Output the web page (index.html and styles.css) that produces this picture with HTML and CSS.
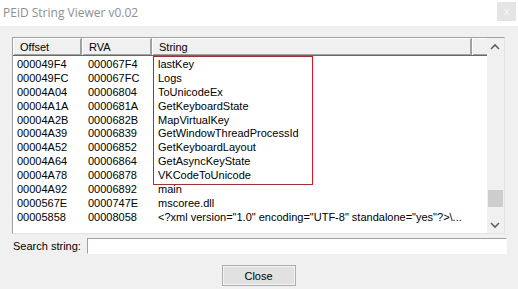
FILE: index.html
```html
<!DOCTYPE html>
<html lang="en">
<head>
    <meta charset="UTF-8">
    <title>PEiD String Viewer v0.02</title>
    <link rel="stylesheet" href="styles.css">
</head>
<body>
    <div class="window">
        <div class="title-bar">
            <span class="title">PEiD String Viewer v0.02</span>
            <span class="close-x">x</span>
        </div>

        <div class="client">
            <div class="list-box">
                <div class="list-main">
                    <div class="list-header">
                        <div class="hcell col-offset">Offset</div>
                        <div class="hcell col-rva">RVA</div>
                        <div class="hcell col-string">String</div>
                        <div class="hcell col-fill"></div>
                    </div>
                    <div class="rows">
                        <div class="row"><span class="col-offset">000049F4</span><span class="col-rva">000067F4</span><span class="col-string">lastKey</span></div>
                        <div class="row"><span class="col-offset">000049FC</span><span class="col-rva">000067FC</span><span class="col-string">Logs</span></div>
                        <div class="row"><span class="col-offset">00004A04</span><span class="col-rva">00006804</span><span class="col-string">ToUnicodeEx</span></div>
                        <div class="row"><span class="col-offset">00004A1A</span><span class="col-rva">0000681A</span><span class="col-string">GetKeyboardState</span></div>
                        <div class="row"><span class="col-offset">00004A2B</span><span class="col-rva">0000682B</span><span class="col-string">MapVirtualKey</span></div>
                        <div class="row"><span class="col-offset">00004A39</span><span class="col-rva">00006839</span><span class="col-string">GetWindowThreadProcessId</span></div>
                        <div class="row"><span class="col-offset">00004A52</span><span class="col-rva">00006852</span><span class="col-string">GetKeyboardLayout</span></div>
                        <div class="row"><span class="col-offset">00004A64</span><span class="col-rva">00006864</span><span class="col-string">GetAsyncKeyState</span></div>
                        <div class="row"><span class="col-offset">00004A78</span><span class="col-rva">00006878</span><span class="col-string">VKCodeToUnicode</span></div>
                        <div class="row"><span class="col-offset">00004A92</span><span class="col-rva">00006892</span><span class="col-string">main</span></div>
                        <div class="row"><span class="col-offset">0000567E</span><span class="col-rva">0000747E</span><span class="col-string">mscoree.dll</span></div>
                        <div class="row"><span class="col-offset">00005858</span><span class="col-rva">00008058</span><span class="col-string">&lt;?xml version="1.0" encoding="UTF-8" standalone="yes"?&gt;\...</span></div>
                    </div>
                    <div class="highlight"></div>
                </div>
                <div class="scrollbar">
                    <svg class="arrow" width="16" height="14" viewBox="0 0 16 14"><path d="M4 9 L8 5 L12 9" fill="none" stroke="#606060" stroke-width="1.6"/></svg>
                    <div class="track"><div class="thumb"></div></div>
                    <svg class="arrow" width="16" height="14" viewBox="0 0 16 14"><path d="M4 5 L8 9 L12 5" fill="none" stroke="#606060" stroke-width="1.6"/></svg>
                </div>
            </div>

            <div class="search-row">
                <label class="search-label">Search string:</label>
                <input class="search-input" type="text">
            </div>

            <div class="button-row">
                <button class="close-btn">Close</button>
            </div>
        </div>
    </div>
</body>
</html>
```

FILE: styles.css
```css
body {
    margin: 0;
    padding: 0;
    background: #f0f0f0;
    font-family: "Liberation Sans", Arial, sans-serif;
    font-size: 11px;
    color: #000;
}

.window {
    width: 518px;
    height: 289px;
    overflow: hidden;
}

.title-bar {
    height: 26px;
    background: #fff;
    display: flex;
    align-items: center;
    justify-content: space-between;
}

.title {
    padding-left: 3px;
    font-family: "Open Sans", "Noto Sans", sans-serif;
    font-size: 12px;
    color: #8f8f8f;
    padding-bottom: 2px;
}

.close-x {
    width: 19px;
    height: 19px;
    margin-right: 2px;
    margin-bottom: 4px;
    background: #e5e5e5;
    color: #f8f8f8;
    font-family: "DejaVu Sans", sans-serif;
    font-size: 11px;
    display: flex;
    align-items: center;
    justify-content: center;
}

.client {
    padding: 11px 13px 0 12px;
}

.list-box {
    height: 195px;
    border: 1px solid #a0a0a0;
    border-right-color: #e3e3e3;
    border-bottom-color: #e3e3e3;
    background: #fff;
    display: flex;
}

.list-main {
    flex: 1;
    position: relative;
    overflow: hidden;
}

.list-header {
    display: flex;
    height: 17px;
    background: #f0f0f0;
    border-bottom: 1px solid #696969;
}

.hcell {
    box-sizing: border-box;
    height: 17px;
    line-height: 16px;
    padding-left: 6px;
    border-top: 1px solid #fff;
    border-left: 1px solid #fff;
    border-right: 2px solid #a0a0a0;
    box-shadow: inset 0 -1px 0 #a0a0a0;
}

.hcell.col-offset { width: 69px; }
.hcell.col-rva { width: 70px; }
.hcell.col-string { width: 320px; }
.hcell.col-fill { width: 15px; border-right: none; }

.rows {
    padding-top: 2px;
}

.row {
    display: flex;
    height: 13.9px;
    line-height: 13.9px;
    white-space: nowrap;
}

.row .col-offset { width: 71px; padding-left: 4px; }
.row .col-rva { width: 70px; }
.row .col-string { padding-left: 0; }

.highlight {
    position: absolute;
    left: 140px;
    top: 18px;
    width: 158px;
    height: 127px;
    border: 1px solid #e81123;
}

.scrollbar {
    width: 17px;
    background: #f0f0f0;
    display: flex;
    flex-direction: column;
}

.arrow {
    display: block;
    margin: 2px 0 1px;
}

.track {
    flex: 1;
    display: flex;
    flex-direction: column;
    justify-content: flex-end;
}

.thumb {
    height: 17px;
    margin: 0 1px 9px;
    background: #cdcdcd;
}

.search-row {
    display: flex;
    align-items: center;
    margin-top: 4px;
    height: 16px;
}

.search-label {
    width: 74px;
    padding-left: 1px;
}

.search-input {
    box-sizing: border-box;
    width: 420px;
    height: 16px;
    margin: 0;
    margin-right: -2px;
    border: 1px solid #a0a0a0;
    border-right-color: #fff;
    border-bottom-color: #fff;
    background: #fff;
    padding: 0;
}

.button-row {
    display: flex;
    justify-content: center;
    margin-top: 11px;
    padding-right: 4px;
}

.close-btn {
    width: 74px;
    height: 21px;
    background: #e1e1e1;
    border: 1px solid #adadad;
    box-shadow: inset 0 0 0 1px #f4f4f4;
    font-family: "Liberation Sans", Arial, sans-serif;
    font-size: 11px;
    color: #000;
    padding: 0;
    margin-left: 4px;
}
```
